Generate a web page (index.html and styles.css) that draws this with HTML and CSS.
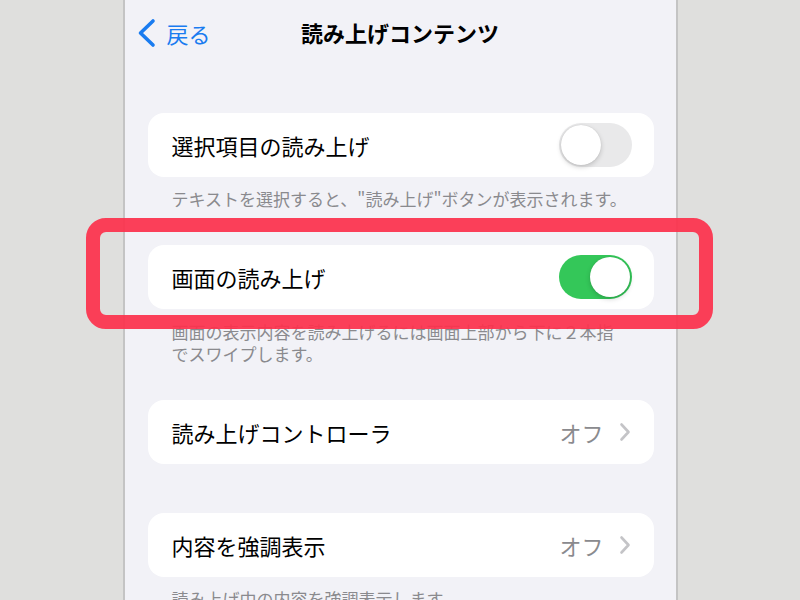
FILE: index.html
```html
<!DOCTYPE html>
<html lang="ja">
<head>
<meta charset="utf-8">
<link rel="stylesheet" href="styles.css">
</head>
<body>
<div class="panel">
  <div class="nav">
    <div class="back">
      <svg class="back-icon" width="20" height="30" viewBox="0 0 20 30"><path d="M16 3 L3.5 15 L16 27" fill="none" stroke="#1a7cf0" stroke-width="3.6" stroke-linecap="round" stroke-linejoin="round"/></svg>
      <span class="back-text">戻る</span>
    </div>
    <div class="title">読み上げコンテンツ</div>
  </div>

  <div class="group">
    <div class="card">
      <span class="label">選択項目の読み上げ</span>
      <span class="toggle"><span class="knob"></span></span>
    </div>
    <div class="footer">テキストを選択すると、"読み上げ"ボタンが表示されます。</div>
  </div>

  <div class="group">
    <div class="card">
      <span class="label">画面の読み上げ</span>
      <span class="toggle on"><span class="knob"></span></span>
    </div>
    <div class="footer two">画面の表示内容を読み上げるには画面上部から下に２本指<br>でスワイプします。</div>
  </div>

  <div class="group nofoot">
    <div class="card">
      <span class="label">読み上げコントローラ</span>
      <span class="value">オフ<svg class="chev" width="12" height="20" viewBox="0 0 12 20"><path d="M2.5 2.5 L9.5 10 L2.5 17.5" fill="none" stroke="#c4c4c7" stroke-width="2.6" stroke-linecap="round" stroke-linejoin="round"/></svg></span>
    </div>
  </div>

  <div class="group">
    <div class="card">
      <span class="label">内容を強調表示</span>
      <span class="value">オフ<svg class="chev" width="12" height="20" viewBox="0 0 12 20"><path d="M2.5 2.5 L9.5 10 L2.5 17.5" fill="none" stroke="#c4c4c7" stroke-width="2.6" stroke-linecap="round" stroke-linejoin="round"/></svg></span>
    </div>
    <div class="footer">読み上げ中の内容を強調表示します。</div>
  </div>
</div>
<div class="highlight"></div>
</body>
</html>
```
FILE: styles.css
```css
html, body {
  margin: 0;
  padding: 0;
}
body {
  width: 800px;
  height: 600px;
  overflow: hidden;
  background: #dfdfdd;
  font-family: "Noto Sans CJK JP", "Noto Sans", sans-serif;
  position: relative;
}
.panel {
  width: 551px;
  height: 600px;
  margin: 0 auto;
  background: #f2f2f7;
  border-left: 2px solid #c4c4c4;
  border-right: 2px solid #c4c4c4;
  overflow: hidden;
}
.nav {
  height: 66px;
  position: relative;
  display: flex;
  align-items: center;
  justify-content: center;
}
.back {
  position: absolute;
  left: 12px;
  top: 18px;
  display: flex;
  align-items: center;
  gap: 10px;
}
.back-icon {
  display: block;
}
.back-text {
  color: #1a7cf0;
  font-size: 22px;
  line-height: 30px;
}
.title {
  font-size: 22px;
  font-weight: 700;
  color: #000;
  line-height: 30px;
  margin-top: -2px;
}
.group {
  margin: 47px 22px 0 23px;
}
.group + .group {
  margin-top: 35px;
}
.group.nofoot + .group {
  margin-top: 49px;
}
.card {
  height: 64px;
  background: #fff;
  border-radius: 16px;
  display: flex;
  align-items: center;
  justify-content: space-between;
  padding: 0 22px 0 24px;
}
.label {
  font-size: 22px;
  color: #000;
  line-height: 30px;
}
.toggle {
  width: 73px;
  height: 44px;
  border-radius: 22px;
  background: #e9e9ea;
  position: relative;
  flex: none;
}
.toggle .knob {
  position: absolute;
  top: 2px;
  left: 2px;
  width: 40px;
  height: 40px;
  border-radius: 50%;
  background: #fff;
  box-shadow: 0 2px 5px rgba(0,0,0,0.18), 0 0 1px rgba(0,0,0,0.15);
}
.toggle.on {
  background: #34c759;
}
.toggle.on .knob {
  left: 31px;
}
.value {
  display: flex;
  align-items: center;
  gap: 15px;
  font-size: 22px;
  color: #8a8a8e;
  line-height: 30px;
}
.chev {
  display: block;
  margin-right: 1px;
}
.footer {
  padding: 11px 24px 0 24px;
  font-size: 17px;
  line-height: 22px;
  color: #8a8a8e;
  white-space: nowrap;
}
.footer.two {
  padding-top: 12px;
  line-height: 22px;
}
.highlight {
  position: absolute;
  left: 86px;
  top: 218px;
  width: 599px;
  height: 83px;
  border: 14px solid rgba(252, 50, 76, 0.93);
  border-radius: 20px;
}
```
